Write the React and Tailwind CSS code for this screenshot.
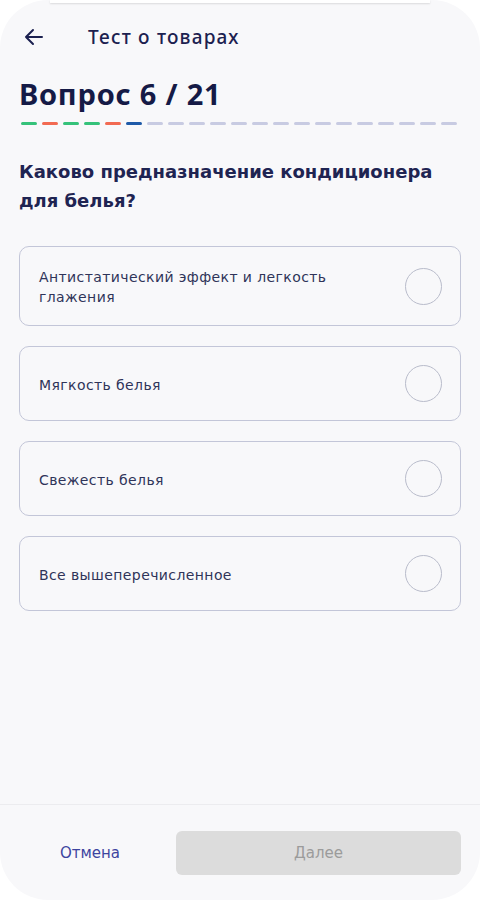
import React from 'react';

const progress = [
  'bg-[#35c27a]', 'bg-[#f26a52]', 'bg-[#35c27a]', 'bg-[#35c27a]', 'bg-[#f26a52]', 'bg-[#1f5aa8]',
  ...Array(15).fill('bg-[#c8cbe2]'),
];

const answers = [
  'Антистатический эффект и легкость глажения',
  'Мягкость белья',
  'Свежесть белья',
  'Все вышеперечисленное',
];

const wide = { fontFamily: '"DejaVu Sans", "Noto Sans", sans-serif' };

const Option = ({ text, tall }) => (
  <div className={`flex items-center justify-between rounded-[10px] border border-[#c3c6d8] pl-[19px] pr-[18px] ${tall ? 'h-[80px]' : 'h-[75px]'}`}>
    <span className="text-[14px] leading-[20px] tracking-[0.4px] text-[#2f3459] max-w-[320px] pt-[2px]" style={wide}>{text}</span>
    <span className="w-[37px] h-[37px] rounded-full border-[1.5px] border-[#b9bccb] shrink-0" />
  </div>
);

export default function App() {
  return (
    <div className="w-[480px] h-[900px] bg-white relative overflow-hidden" style={{ fontFamily: '"Noto Sans", "Open Sans", sans-serif' }}>
      <div className="absolute top-0 left-[50px] right-[50px] h-[3px] bg-white shadow-[0_1px_2px_rgba(0,0,0,0.12)] z-10" />
      <div className="h-full bg-[#f8f8fa] rounded-[48px] flex flex-col">
        <div className="flex items-center h-[72px] pl-[22px] pt-[2px]">
          <svg width="24" height="24" viewBox="0 0 24 24" fill="none" stroke="#1c2150" strokeWidth="2" strokeLinecap="round" strokeLinejoin="round">
            <path d="M20 12H4M11 5l-7 7 7 7" />
          </svg>
          <span className="ml-[42px] text-[19px] font-medium tracking-[1.2px] text-[#1c2150]">Тест о товарах</span>
        </div>
        <div className="px-[19px]">
          <h1 className="text-[29px] leading-[40px] font-bold text-[#151a46] mt-[2px] tracking-[0.8px]">Вопрос 6 / 21</h1>
          <div className="flex gap-[5px] mt-[8px] pl-[2px]">
            {progress.map((c, i) => (
              <div key={i} className={`w-[16px] h-[3px] rounded-full ${c}`} />
            ))}
          </div>
          <p className="mt-[32px] text-[18px] leading-[29px] font-semibold text-[#1f2452] pr-[10px]" style={wide}>
            Каково предназначение кондиционера для белья?
          </p>
          <div className="mt-[31px] flex flex-col gap-[20px]">
            {answers.map((a, i) => (
              <Option key={i} text={a} tall={i === 0} />
            ))}
          </div>
        </div>
        <div className="mt-auto border-t border-[#ececef] h-[96px] flex items-start pt-[26px] pl-[20px] pr-[19px]">
          <button className="w-[140px] h-[44px] text-[15px] text-[#3d449f]" style={wide}>Отмена</button>
          <button className="ml-[16px] flex-1 h-[44px] rounded-[6px] bg-[#dcdcdc] text-[15px] text-[#9b9b9b]" style={wide}>Далее</button>
        </div>
      </div>
    </div>
  );
}
